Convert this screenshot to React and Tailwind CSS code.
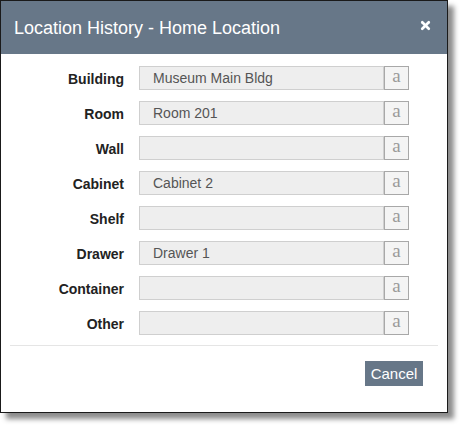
import { X } from 'lucide-react';

const fields = [
  { label: 'Building', value: 'Museum Main Bldg' },
  { label: 'Room', value: 'Room 201' },
  { label: 'Wall', value: '' },
  { label: 'Cabinet', value: 'Cabinet 2' },
  { label: 'Shelf', value: '' },
  { label: 'Drawer', value: 'Drawer 1' },
  { label: 'Container', value: '' },
  { label: 'Other', value: '' },
];

const App = () => {
  return (
    <div className="w-[463px] h-[428px] bg-white" style={{ fontFamily: '"Liberation Sans", Arial, sans-serif' }}>
      <div className="w-[448px] h-[413px] border border-[#1a1a1a] bg-white shadow-[6px_6px_5px_rgba(0,0,0,0.45)] flex flex-col">
        {/* Header */}
        <div className="h-[53px] bg-[#677788] flex items-center justify-between pl-[13px] pr-[15px] shrink-0">
          <h1 className="text-white text-[18px] leading-none">Location History - Home Location</h1>
          <X className="w-[13px] h-[13px] text-white mb-[5px]" strokeWidth={5} />
        </div>

        {/* Fields */}
        <div className="flex flex-col gap-[11px] pt-[12px]">
          {fields.map((f) => (
            <div key={f.label} className="flex items-center h-[24px]">
              <label className="w-[123px] text-right text-[14px] font-bold text-[#222] shrink-0 pt-[2px]">{f.label}</label>
              <div className="ml-[15px] flex h-[24px]">
                <div className="w-[245px] h-full bg-[#eeeeee] border border-[#cfcfcf] pl-[13px] flex items-center text-[14px] text-[#555]">
                  {f.value}
                </div>
                <div className="w-[25px] h-full bg-[#f4f4f4] border border-[#a8a8a8] flex items-center justify-center text-[19px] text-[#9a9a9a] pb-[3px]" style={{ fontFamily: '"Liberation Serif", serif' }}>
                  a
                </div>
              </div>
            </div>
          ))}
        </div>

        {/* Footer */}
        <div className="mx-[9px] mt-[10px] border-t border-[#e5e5e5]" />
        <div className="flex justify-end pr-[24px] pt-[15px]">
          <button type="button" className="h-[25px] w-[58px] bg-[#677788] text-white text-[15px] leading-none">
            Cancel
          </button>
        </div>
      </div>
    </div>
  );
};

export default App;
